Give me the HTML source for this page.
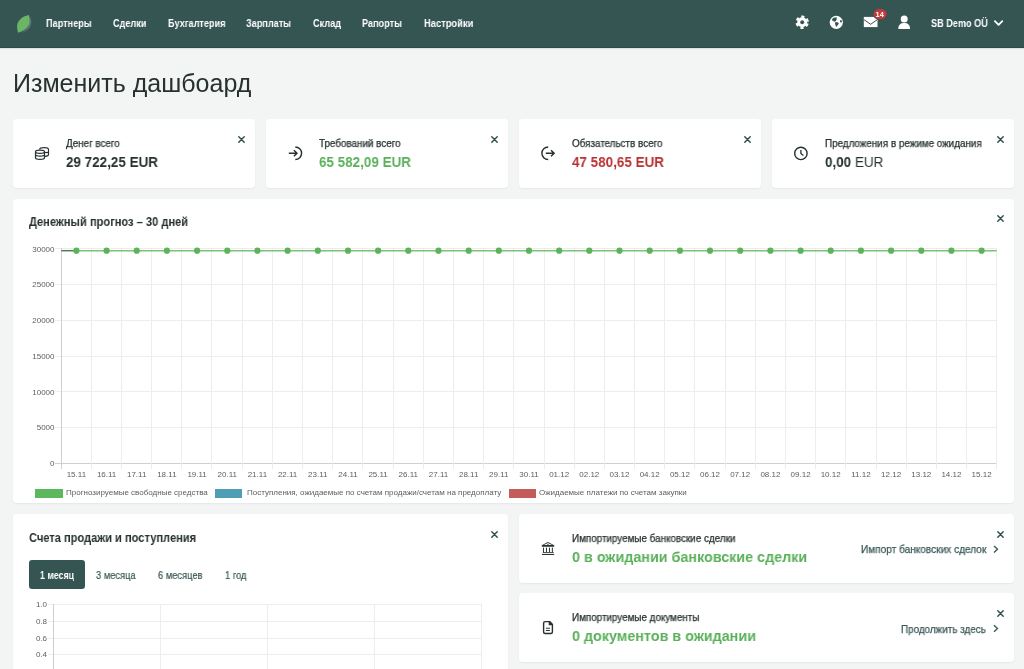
<!DOCTYPE html>
<html><head><meta charset="utf-8">
<style>
*{box-sizing:border-box;margin:0;padding:0}
html,body{width:1024px;height:669px;overflow:hidden;-webkit-font-smoothing:antialiased;background:#f3f5f4;font-family:"Liberation Sans",sans-serif;color:#263130}
.abs{position:absolute}
#hdr{position:absolute;left:0;top:0;width:1024px;height:48px;background:#355553;border-bottom:1px solid #2b4a49;box-shadow:0 1px 1px rgba(0,0,0,0.08)}
.nav{position:absolute;will-change:transform;top:17px;font-size:10.5px;transform:scaleX(0.87);transform-origin:0 0;font-weight:bold;color:#fff;white-space:nowrap;line-height:12px}
.h1{position:absolute;will-change:transform;left:13px;top:68px;font-weight:normal;font-size:25px;line-height:30px;color:#263130;white-space:nowrap}
.card{position:absolute;background:#fff;border-radius:4px;box-shadow:0 1px 2px rgba(20,40,60,0.06)}
.lbl{position:absolute;will-change:transform;font-size:10px;transform:scaleX(0.985);transform-origin:0 0;line-height:12px;white-space:nowrap;color:#263130;-webkit-text-stroke:0.25px #263130}
.val{position:absolute;will-change:transform;font-size:15px;transform:scaleX(0.896);transform-origin:0 0;line-height:17px;white-space:nowrap;font-weight:bold;color:#263130}
.ttl{position:absolute;will-change:transform;font-size:12.2px;transform:scaleX(0.91);transform-origin:0 0;line-height:14px;white-space:nowrap;font-weight:bold;color:#263130}
.g{color:#5ab05a}.r{color:#b83232}
.n{font-weight:normal}
.tab{position:absolute;will-change:transform;top:560.5px;height:29px;line-height:29px;font-size:11px;transform:scaleX(0.85);transform-origin:0 0;color:#355553;white-space:nowrap;-webkit-text-stroke:0.2px #355553}
.link{position:absolute;will-change:transform;font-size:10.5px;transform:scaleX(0.96);transform-origin:0 0;line-height:12px;white-space:nowrap;color:#3b5857;-webkit-text-stroke:0.25px #3b5857}
svg.ov{position:absolute;left:0;top:0}
.tl{font-family:"Liberation Sans",sans-serif;font-size:8px;fill:#5e5e5e}
.leg{position:absolute;will-change:transform;top:488px;font-size:8px;line-height:10px;color:#5e5e5e;white-space:nowrap}
.legb{position:absolute;top:488.5px;height:9px}
</style></head><body>
<div id="hdr"></div>
<div class="nav" style="left:46px">Партнеры</div>
<div class="nav" style="left:113px">Сделки</div>
<div class="nav" style="left:168px">Бухгалтерия</div>
<div class="nav" style="left:246px">Зарплаты</div>
<div class="nav" style="left:313px">Склад</div>
<div class="nav" style="left:362px">Рапорты</div>
<div class="nav" style="left:423.5px;transform:scaleX(0.89)">Настройки</div>
<div class="nav" style="left:931px;top:16.9px">SB Demo OÜ</div>

<div class="h1">Изменить дашбоард</div>

<div class="card" style="left:12.7px;top:119px;width:242.55px;height:68.6px"></div>
<div class="card" style="left:265.65px;top:119px;width:242.55px;height:68.6px"></div>
<div class="card" style="left:518.6px;top:119px;width:242.55px;height:68.6px"></div>
<div class="card" style="left:771.55px;top:119px;width:242.55px;height:68.6px"></div>

<div class="card" style="left:12.7px;top:198.6px;width:1001.4px;height:304.4px"></div>
<div class="card" style="left:12.7px;top:514.1px;width:495.5px;height:170px"></div>
<div class="card" style="left:518.6px;top:514.1px;width:495.5px;height:68.7px"></div>
<div class="card" style="left:518.6px;top:593px;width:495.5px;height:68.7px"></div>

<div class="lbl" style="left:66px;top:137.5px">Денег всего</div>
<div class="val" style="left:66px;top:153.1px">29 722,25 EUR</div>
<div class="lbl" style="left:319px;top:137.5px">Требований всего</div>
<div class="val g" style="left:319px;top:153.1px">65 582,09 EUR</div>
<div class="lbl" style="left:572px;top:137.5px">Обязательств всего</div>
<div class="val r" style="left:572px;top:153.1px">47 580,65 EUR</div>
<div class="lbl" style="left:825px;top:137.5px">Предложения в режиме ожидания</div>
<div class="val" style="left:825px;top:153.1px">0,00 <span class="n">EUR</span></div>

<div class="ttl" style="left:29px;top:214.9px">Денежный прогноз – 30 дней</div>
<div class="legb" style="left:35px;width:27.5px;background:#5cb85c"></div>
<div class="leg" style="left:66px">Прогнозируемые свободные средства</div>
<div class="legb" style="left:215px;width:27px;background:#4e9fb5"></div>
<div class="leg" style="left:247px">Поступления, ожидаемые по счетам продажи/счетам на предоплату</div>
<div class="legb" style="left:509px;width:26.5px;background:#c55c5c"></div>
<div class="leg" style="left:539px">Ожидаемые платежи по счетам закупки</div>

<div class="ttl" style="left:29px;top:531.1px">Счета продажи и поступления</div>
<div class="abs" style="left:29px;top:560.3px;width:56px;height:28.5px;border-radius:3px;background:#355553"></div>
<div class="tab" style="left:40px;color:#fff;font-weight:bold;transform:scaleX(0.8);-webkit-text-stroke:0">1 месяц</div>
<div class="tab" style="left:95.5px">3 месяца</div>
<div class="tab" style="left:157.5px">6 месяцев</div>
<div class="tab" style="left:224.5px">1 год</div>

<div class="lbl" style="left:572px;top:532.8px">Импортируемые банковские сделки</div>
<div class="val g" style="left:572px;top:547.7px;font-size:15px;transform:scaleX(0.955)">0 в ожидании банковские сделки</div>
<div class="link" style="left:861px;top:543.4px">Импорт банковских сделок</div>
<div class="lbl" style="left:572px;top:611.8px">Импортируемые документы</div>
<div class="val g" style="left:572px;top:626.7px;font-size:15px;transform:scaleX(0.955)">0 документов в ожидании</div>
<div class="link" style="left:900.7px;top:622.6px;transform:scaleX(0.94)">Продолжить здесь</div>

<svg class="ov" width="1024" height="669" viewBox="0 0 1024 669">
<!-- logo -->
<path d="M29.4,16.2 C31.8,19.5 32.2,24 29.5,27.8 C27.5,30.5 24.5,32.2 21,33.2 C26.5,30 30.2,24.5 29.4,16.2 Z" fill="#7d8c94" opacity="0.55"/>
<path d="M28.8,15 C22,16.2 16.6,21.5 17.1,27 C17.2,29.3 17.6,31.2 18.1,32.7 C24.5,31.2 29.9,26.5 29.7,20.2 C29.6,18.2 29.3,16.4 28.8,15 Z" fill="#6ab666"/>
<!-- gear -->
<g transform="translate(802.2,22.2)" fill="#fff">
<circle r="5"/>
<circle r="5.6" fill="none" stroke="#fff" stroke-width="2.2" stroke-dasharray="3.1 2.76" transform="rotate(14.1)"/>
<circle r="1.95" fill="#355553"/>
</g>
<!-- globe -->
<g transform="translate(836.3,22.3)">
<circle r="6.6" fill="#fff"/>
<path d="M-4.19,-3.14 L-2.84,-4.63 L0.45,-4.93 L0.3,-2.54 L-0.45,-1.35 L-1.35,-0.45 L-3.44,-1.35 L-4.33,-2.24Z" fill="#355553"/>
<path d="M-1.35,-0.15 L1.64,0 L2.54,1.35 L1.05,3.14 L0,4.63 L-0.75,3.14 L-1.2,1.64Z" fill="#355553"/>
<ellipse cx="4.63" cy="-1.05" rx="0.9" ry="1.35" fill="#355553"/>
</g>
<!-- mail -->
<g transform="translate(870.65,22)">
<rect x="-6.85" y="-5.1" width="13.7" height="10.2" fill="#fff"/>
<polyline points="-6.85,-2.5 0,2.3 6.85,-2.5" fill="none" stroke="#355553" stroke-width="1"/>
</g>
<!-- badge -->
<ellipse cx="880.1" cy="14.05" rx="7.4" ry="6.1" fill="#355553"/>
<ellipse cx="880.1" cy="14.05" rx="6.6" ry="5.3" fill="#c03a3a"/>
<text x="879.7" y="16.9" text-anchor="middle" font-family="Liberation Sans" font-weight="bold" font-size="7.4" fill="#fff">14</text>
<!-- user -->
<g fill="#fff">
<circle cx="904.2" cy="19" r="3.5"/>
<path d="M898.3,28.9 C898.3,25 900.5,23 904.2,23 C907.9,23 910,25 910,28.9 Z"/>
</g>
<!-- chevron -->
<polyline points="994.9,21.2 998.6,24.9 1002.3,21.2" fill="none" stroke="#fff" stroke-width="1.8" stroke-linecap="round" stroke-linejoin="round"/>

<!-- close X -->
<g stroke="#2d4f4f" stroke-width="1.45" stroke-linecap="round" fill="none">
<path d="M238.80,136.80 L244.20,142.20 M244.20,136.80 L238.80,142.20"/>
<path d="M491.80,136.80 L497.20,142.20 M497.20,136.80 L491.80,142.20"/>
<path d="M744.80,136.80 L750.20,142.20 M750.20,136.80 L744.80,142.20"/>
<path d="M997.80,136.80 L1003.20,142.20 M1003.20,136.80 L997.80,142.20"/>
<path d="M997.80,215.80 L1003.20,221.20 M1003.20,215.80 L997.80,221.20"/>
<path d="M491.80,531.80 L497.20,537.20 M497.20,531.80 L491.80,537.20"/>
<path d="M997.80,531.80 L1003.20,537.20 M1003.20,531.80 L997.80,537.20"/>
<path d="M997.80,610.80 L1003.20,616.20 M1003.20,610.80 L997.80,616.20"/>
</g>
<!-- link chevrons -->
<g stroke="#3b5857" stroke-width="1.4" fill="none">
<polyline points="994,546 997.5,549.3 994,552.6"/>
<polyline points="994,625.2 997.5,628.5 994,631.8"/>
</g>

<!-- card icons -->
<g stroke="#263130" stroke-width="1.2" fill="none" stroke-linejoin="round">
<!-- coins -->
<g>
<path d="M39.5,149.5 C40,147 48.5,147 48.5,149.5 L48.5,154.8 C48.5,155.8 47.5,156.2 45,156.3"/>
<path d="M44.5,152.5 L48.5,152.5" />
<ellipse cx="40" cy="151.8" rx="4.5" ry="1.6" fill="#fff"/>
<path d="M35.5,151.8 L35.5,157.8 C35.5,160 44.5,160 44.5,157.8 L44.5,151.8"/>
<path d="M35.5,154.8 C35.5,156.6 44.5,156.6 44.5,154.8"/>
</g>
<!-- sign in -->
<path d="M295.3,146.95 A6.3,6.3 0 0 1 295.3,159.55" stroke-width="1.4"/>
<path d="M288.8,153.25 L297,153.25 M293.9,150.2 L297,153.25 L293.9,156.3" stroke-width="1.5"/>
<!-- sign out -->
<path d="M548.2,146.95 A6.3,6.3 0 0 0 548.2,159.55" stroke-width="1.4"/>
<path d="M545.8,153.25 L554.4,153.25 M551,150.2 L554.2,153.25 L551,156.3" stroke-width="1.5"/>
<!-- clock -->
<circle cx="800.9" cy="153.4" r="6.2" stroke-width="1.4"/>
<path d="M800.9,150 L800.9,153.6 L803.4,155.6" stroke-width="1.3"/>
<!-- file -->
<path d="M545.2,621.6 L549.6,621.6 L552.4,624.4 L552.4,632 C552.4,633 551.9,633.5 550.9,633.5 L545.1,633.5 C544.1,633.5 543.6,633 543.6,632 L543.6,623.2 C543.6,622.2 544.2,621.6 545.2,621.6Z" stroke-width="1.4"/>
<path d="M549.3,621.5 L552.5,624.7 L549.3,624.7Z" fill="#263130"/>
<path d="M545.9,628.2 L549.9,628.2 M545.9,630.5 L549.9,630.5" stroke-width="1.1"/>
</g>
<!-- bank -->
<g fill="#263130">
<path d="M541.8,546.7 L541.8,545.2 L547.9,542 L554.2,545.2 L554.2,546.7 Z"/>
<path d="M543.9,545.1 L547.9,543.1 L552.1,545.1 Z" fill="#fff"/>
<path d="M546.9,545.3 A1,1 0 0 1 548.9,545.3 Z"/>
<rect x="542.95" y="547.6" width="1" height="4.8"/>
<rect x="545.95" y="547.6" width="1" height="4.8"/>
<rect x="548.95" y="547.6" width="1" height="4.8"/>
<rect x="551.85" y="547.6" width="1" height="4.8"/>
<rect x="542.8" y="552.1" width="10.9" height="0.8"/>
<rect x="542" y="553.9" width="12.2" height="1.1"/>
</g>

<!-- chart 1 -->
<line x1="55" y1="463.5" x2="996.7" y2="463.5" stroke="#cfcfcf" stroke-width="1"/>
<line x1="55" y1="427.5" x2="996.7" y2="427.5" stroke="#ededed" stroke-width="1"/>
<line x1="55" y1="391.5" x2="996.7" y2="391.5" stroke="#ededed" stroke-width="1"/>
<line x1="55" y1="356.5" x2="996.7" y2="356.5" stroke="#ededed" stroke-width="1"/>
<line x1="55" y1="320.5" x2="996.7" y2="320.5" stroke="#ededed" stroke-width="1"/>
<line x1="55" y1="284.5" x2="996.7" y2="284.5" stroke="#ededed" stroke-width="1"/>
<line x1="55" y1="248.5" x2="996.7" y2="248.5" stroke="#ededed" stroke-width="1"/>
<line x1="61.5" y1="248" x2="61.5" y2="469" stroke="#cfcfcf" stroke-width="1"/>
<line x1="91.5" y1="248" x2="91.5" y2="469" stroke="#ededed" stroke-width="1"/>
<line x1="121.5" y1="248" x2="121.5" y2="469" stroke="#ededed" stroke-width="1"/>
<line x1="151.5" y1="248" x2="151.5" y2="469" stroke="#ededed" stroke-width="1"/>
<line x1="181.5" y1="248" x2="181.5" y2="469" stroke="#ededed" stroke-width="1"/>
<line x1="211.5" y1="248" x2="211.5" y2="469" stroke="#ededed" stroke-width="1"/>
<line x1="242.5" y1="248" x2="242.5" y2="469" stroke="#ededed" stroke-width="1"/>
<line x1="272.5" y1="248" x2="272.5" y2="469" stroke="#ededed" stroke-width="1"/>
<line x1="302.5" y1="248" x2="302.5" y2="469" stroke="#ededed" stroke-width="1"/>
<line x1="332.5" y1="248" x2="332.5" y2="469" stroke="#ededed" stroke-width="1"/>
<line x1="362.5" y1="248" x2="362.5" y2="469" stroke="#ededed" stroke-width="1"/>
<line x1="393.5" y1="248" x2="393.5" y2="469" stroke="#ededed" stroke-width="1"/>
<line x1="423.5" y1="248" x2="423.5" y2="469" stroke="#ededed" stroke-width="1"/>
<line x1="453.5" y1="248" x2="453.5" y2="469" stroke="#ededed" stroke-width="1"/>
<line x1="483.5" y1="248" x2="483.5" y2="469" stroke="#ededed" stroke-width="1"/>
<line x1="513.5" y1="248" x2="513.5" y2="469" stroke="#ededed" stroke-width="1"/>
<line x1="544.5" y1="248" x2="544.5" y2="469" stroke="#ededed" stroke-width="1"/>
<line x1="574.5" y1="248" x2="574.5" y2="469" stroke="#ededed" stroke-width="1"/>
<line x1="604.5" y1="248" x2="604.5" y2="469" stroke="#ededed" stroke-width="1"/>
<line x1="634.5" y1="248" x2="634.5" y2="469" stroke="#ededed" stroke-width="1"/>
<line x1="664.5" y1="248" x2="664.5" y2="469" stroke="#ededed" stroke-width="1"/>
<line x1="694.5" y1="248" x2="694.5" y2="469" stroke="#ededed" stroke-width="1"/>
<line x1="725.5" y1="248" x2="725.5" y2="469" stroke="#ededed" stroke-width="1"/>
<line x1="755.5" y1="248" x2="755.5" y2="469" stroke="#ededed" stroke-width="1"/>
<line x1="785.5" y1="248" x2="785.5" y2="469" stroke="#ededed" stroke-width="1"/>
<line x1="815.5" y1="248" x2="815.5" y2="469" stroke="#ededed" stroke-width="1"/>
<line x1="845.5" y1="248" x2="845.5" y2="469" stroke="#ededed" stroke-width="1"/>
<line x1="876.5" y1="248" x2="876.5" y2="469" stroke="#ededed" stroke-width="1"/>
<line x1="906.5" y1="248" x2="906.5" y2="469" stroke="#ededed" stroke-width="1"/>
<line x1="936.5" y1="248" x2="936.5" y2="469" stroke="#ededed" stroke-width="1"/>
<line x1="966.5" y1="248" x2="966.5" y2="469" stroke="#ededed" stroke-width="1"/>
<line x1="996.5" y1="248" x2="996.5" y2="469" stroke="#ededed" stroke-width="1"/>
<text x="54.5" y="466.0" text-anchor="end" class="tl">0</text>
<text x="54.5" y="430.3" text-anchor="end" class="tl">5000</text>
<text x="54.5" y="394.6" text-anchor="end" class="tl">10000</text>
<text x="54.5" y="358.8" text-anchor="end" class="tl">15000</text>
<text x="54.5" y="323.1" text-anchor="end" class="tl">20000</text>
<text x="54.5" y="287.4" text-anchor="end" class="tl">25000</text>
<text x="54.5" y="251.7" text-anchor="end" class="tl">30000</text>
<text x="76.4" y="477" text-anchor="middle" class="tl">15.11</text>
<text x="106.6" y="477" text-anchor="middle" class="tl">16.11</text>
<text x="136.7" y="477" text-anchor="middle" class="tl">17.11</text>
<text x="166.9" y="477" text-anchor="middle" class="tl">18.11</text>
<text x="197.1" y="477" text-anchor="middle" class="tl">19.11</text>
<text x="227.3" y="477" text-anchor="middle" class="tl">20.11</text>
<text x="257.4" y="477" text-anchor="middle" class="tl">21.11</text>
<text x="287.6" y="477" text-anchor="middle" class="tl">22.11</text>
<text x="317.8" y="477" text-anchor="middle" class="tl">23.11</text>
<text x="348.0" y="477" text-anchor="middle" class="tl">24.11</text>
<text x="378.1" y="477" text-anchor="middle" class="tl">25.11</text>
<text x="408.3" y="477" text-anchor="middle" class="tl">26.11</text>
<text x="438.5" y="477" text-anchor="middle" class="tl">27.11</text>
<text x="468.7" y="477" text-anchor="middle" class="tl">28.11</text>
<text x="498.8" y="477" text-anchor="middle" class="tl">29.11</text>
<text x="529.0" y="477" text-anchor="middle" class="tl">30.11</text>
<text x="559.2" y="477" text-anchor="middle" class="tl">01.12</text>
<text x="589.3" y="477" text-anchor="middle" class="tl">02.12</text>
<text x="619.5" y="477" text-anchor="middle" class="tl">03.12</text>
<text x="649.7" y="477" text-anchor="middle" class="tl">04.12</text>
<text x="679.9" y="477" text-anchor="middle" class="tl">05.12</text>
<text x="710.0" y="477" text-anchor="middle" class="tl">06.12</text>
<text x="740.2" y="477" text-anchor="middle" class="tl">07.12</text>
<text x="770.4" y="477" text-anchor="middle" class="tl">08.12</text>
<text x="800.6" y="477" text-anchor="middle" class="tl">09.12</text>
<text x="830.7" y="477" text-anchor="middle" class="tl">10.12</text>
<text x="860.9" y="477" text-anchor="middle" class="tl">11.12</text>
<text x="891.1" y="477" text-anchor="middle" class="tl">12.12</text>
<text x="921.3" y="477" text-anchor="middle" class="tl">13.12</text>
<text x="951.4" y="477" text-anchor="middle" class="tl">14.12</text>
<text x="981.6" y="477" text-anchor="middle" class="tl">15.12</text>
<line x1="61.3" y1="250.7" x2="76.4" y2="250.7" stroke="#4f7f4f" stroke-width="1.5"/>
<line x1="76.4" y1="250.7" x2="996.7" y2="250.7" stroke="#7bc27b" stroke-width="1.5"/>
<circle cx="76.4" cy="250.7" r="3.1" fill="#5cb35c"/>
<circle cx="106.6" cy="250.7" r="3.1" fill="#5cb35c"/>
<circle cx="136.7" cy="250.7" r="3.1" fill="#5cb35c"/>
<circle cx="166.9" cy="250.7" r="3.1" fill="#5cb35c"/>
<circle cx="197.1" cy="250.7" r="3.1" fill="#5cb35c"/>
<circle cx="227.3" cy="250.7" r="3.1" fill="#5cb35c"/>
<circle cx="257.4" cy="250.7" r="3.1" fill="#5cb35c"/>
<circle cx="287.6" cy="250.7" r="3.1" fill="#5cb35c"/>
<circle cx="317.8" cy="250.7" r="3.1" fill="#5cb35c"/>
<circle cx="348.0" cy="250.7" r="3.1" fill="#5cb35c"/>
<circle cx="378.1" cy="250.7" r="3.1" fill="#5cb35c"/>
<circle cx="408.3" cy="250.7" r="3.1" fill="#5cb35c"/>
<circle cx="438.5" cy="250.7" r="3.1" fill="#5cb35c"/>
<circle cx="468.7" cy="250.7" r="3.1" fill="#5cb35c"/>
<circle cx="498.8" cy="250.7" r="3.1" fill="#5cb35c"/>
<circle cx="529.0" cy="250.7" r="3.1" fill="#5cb35c"/>
<circle cx="559.2" cy="250.7" r="3.1" fill="#5cb35c"/>
<circle cx="589.3" cy="250.7" r="3.1" fill="#5cb35c"/>
<circle cx="619.5" cy="250.7" r="3.1" fill="#5cb35c"/>
<circle cx="649.7" cy="250.7" r="3.1" fill="#5cb35c"/>
<circle cx="679.9" cy="250.7" r="3.1" fill="#5cb35c"/>
<circle cx="710.0" cy="250.7" r="3.1" fill="#5cb35c"/>
<circle cx="740.2" cy="250.7" r="3.1" fill="#5cb35c"/>
<circle cx="770.4" cy="250.7" r="3.1" fill="#5cb35c"/>
<circle cx="800.6" cy="250.7" r="3.1" fill="#5cb35c"/>
<circle cx="830.7" cy="250.7" r="3.1" fill="#5cb35c"/>
<circle cx="860.9" cy="250.7" r="3.1" fill="#5cb35c"/>
<circle cx="891.1" cy="250.7" r="3.1" fill="#5cb35c"/>
<circle cx="921.3" cy="250.7" r="3.1" fill="#5cb35c"/>
<circle cx="951.4" cy="250.7" r="3.1" fill="#5cb35c"/>
<circle cx="981.6" cy="250.7" r="3.1" fill="#5cb35c"/>
<!-- chart 2 -->
<line x1="48" y1="604.5" x2="481" y2="604.5" stroke="#ededed"/>
<text x="47" y="607.4" text-anchor="end" class="tl">1.0</text>
<line x1="48" y1="621.5" x2="481" y2="621.5" stroke="#ededed"/>
<text x="47" y="624.0" text-anchor="end" class="tl">0.8</text>
<line x1="48" y1="638.5" x2="481" y2="638.5" stroke="#ededed"/>
<text x="47" y="640.6" text-anchor="end" class="tl">0.6</text>
<line x1="48" y1="654.5" x2="481" y2="654.5" stroke="#ededed"/>
<text x="47" y="657.2" text-anchor="end" class="tl">0.4</text>
<line x1="48" y1="671.5" x2="481" y2="671.5" stroke="#ededed"/>
<text x="47" y="673.8" text-anchor="end" class="tl">0.2</text>
<line x1="48" y1="687.5" x2="481" y2="687.5" stroke="#ededed"/>
<text x="47" y="690.4" text-anchor="end" class="tl">0.0</text>
<line x1="53.5" y1="604" x2="53.5" y2="669" stroke="#cfcfcf"/>

<line x1="160.5" y1="604" x2="160.5" y2="669" stroke="#ededed"/>
<line x1="267.5" y1="604" x2="267.5" y2="669" stroke="#ededed"/>
<line x1="374.5" y1="604" x2="374.5" y2="669" stroke="#ededed"/>
<line x1="481.5" y1="604" x2="481.5" y2="669" stroke="#ededed"/>
</svg>
</body></html>
